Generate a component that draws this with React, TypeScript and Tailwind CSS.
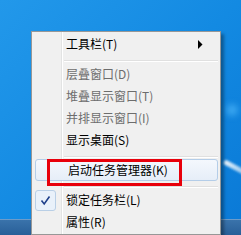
import React from 'react'

interface MenuItem {
  label: string
  disabled?: boolean
  submenu?: boolean
  checked?: boolean
  highlighted?: boolean
}

type Entry = MenuItem | 'sep'

const entries: Entry[] = [
  { label: '工具栏(T)', submenu: true },
  'sep',
  { label: '层叠窗口(D)', disabled: true },
  { label: '堆叠显示窗口(T)', disabled: true },
  { label: '并排显示窗口(I)', disabled: true },
  { label: '显示桌面(S)' },
  'sep',
  { label: '启动任务管理器(K)', highlighted: true },
  'sep',
  { label: '锁定任务栏(L)', checked: true },
  { label: '属性(R)' },
]

function Separator() {
  return (
    <div className="h-[8px] pl-[30px] pt-[5px]">
      <div className="h-px bg-[#e0e0e0]" />
      <div className="h-px bg-white" />
    </div>
  )
}

function Item({ item }: { item: MenuItem }) {
  return (
    <div
      className={
        'relative flex h-[22px] items-center pl-[32px] pr-2 ' +
        (item.highlighted
          ? 'ml-px rounded-[3px] border border-[#b4cde8] bg-gradient-to-b from-[#f4f8fd] to-[#e6eef8] pl-[31px]'
          : '')
      }
    >
      {item.checked && (
        <div className="absolute left-px top-px flex h-[21px] w-[21px] items-center justify-center rounded-[3px] border border-[#b9cfe6] bg-[#e9f1fa]">
          <svg width="11" height="11" viewBox="0 0 11 11">
            <path d="M1.5 5.5 L4.2 9 L9.5 1.5" fill="none" stroke="#1e3f8a" strokeWidth="1.6" />
          </svg>
        </div>
      )}
      <span
        className={
          'flex-1 text-[12px] leading-none ' +
          (item.disabled ? 'text-[#6d6d6d]' : 'text-black')
        }
      >
        {item.label}
      </span>
      {item.submenu && (
        <svg width="5" height="9" viewBox="0 0 5 9" className="mr-[7px]">
          <path d="M0 0 L4.5 4.5 L0 9 Z" fill="#000" />
        </svg>
      )}
      {item.highlighted && (
        <div className="absolute left-[11px] top-[-1px] h-[27px] w-[135px] border-[3px] border-[#e8000b]" />
      )}
    </div>
  )
}

export default function App() {
  return (
    <div
      className="relative flex h-[235px] w-[241px] flex-col overflow-hidden bg-gradient-to-br from-[#2298ea] via-[#138ae2] to-[#0a79d6]"
      style={{ fontFamily: '"Noto Sans CJK SC", "Noto Sans", sans-serif' }}
    >
      {/* desktop */}
      <div className="relative flex-1">
        <div className="absolute left-[222px] top-[167px] h-[5px] w-[34px] rotate-[28deg] rounded-full bg-gradient-to-r from-white/90 to-white/40 blur-[1px]" />
        <div className="absolute left-[226px] top-[104px] h-[12px] w-[12px] rounded-full bg-[#3aa6f0] blur-[3px]" />
      </div>
      {/* taskbar */}
      <div className="h-[16px] border-t border-[#6c9bc9] bg-gradient-to-b from-[#3a73ab] to-[#285f98]" />

      {/* context menu */}
      <div className="absolute left-[31px] top-[31px] w-[190px] border border-[#979797] bg-[#f0f0f0] px-[2px] py-px shadow-[3px_3px_3px_rgba(0,0,0,0.35)]">
        <div className="absolute bottom-0 left-[29px] top-0 w-[2px] border-l border-[#e2e3e3] bg-white" />
        <div className="relative">
          {entries.map((e, i) =>
            e === 'sep' ? <Separator key={i} /> : <Item key={i} item={e} />
          )}
        </div>
      </div>
    </div>
  )
}
